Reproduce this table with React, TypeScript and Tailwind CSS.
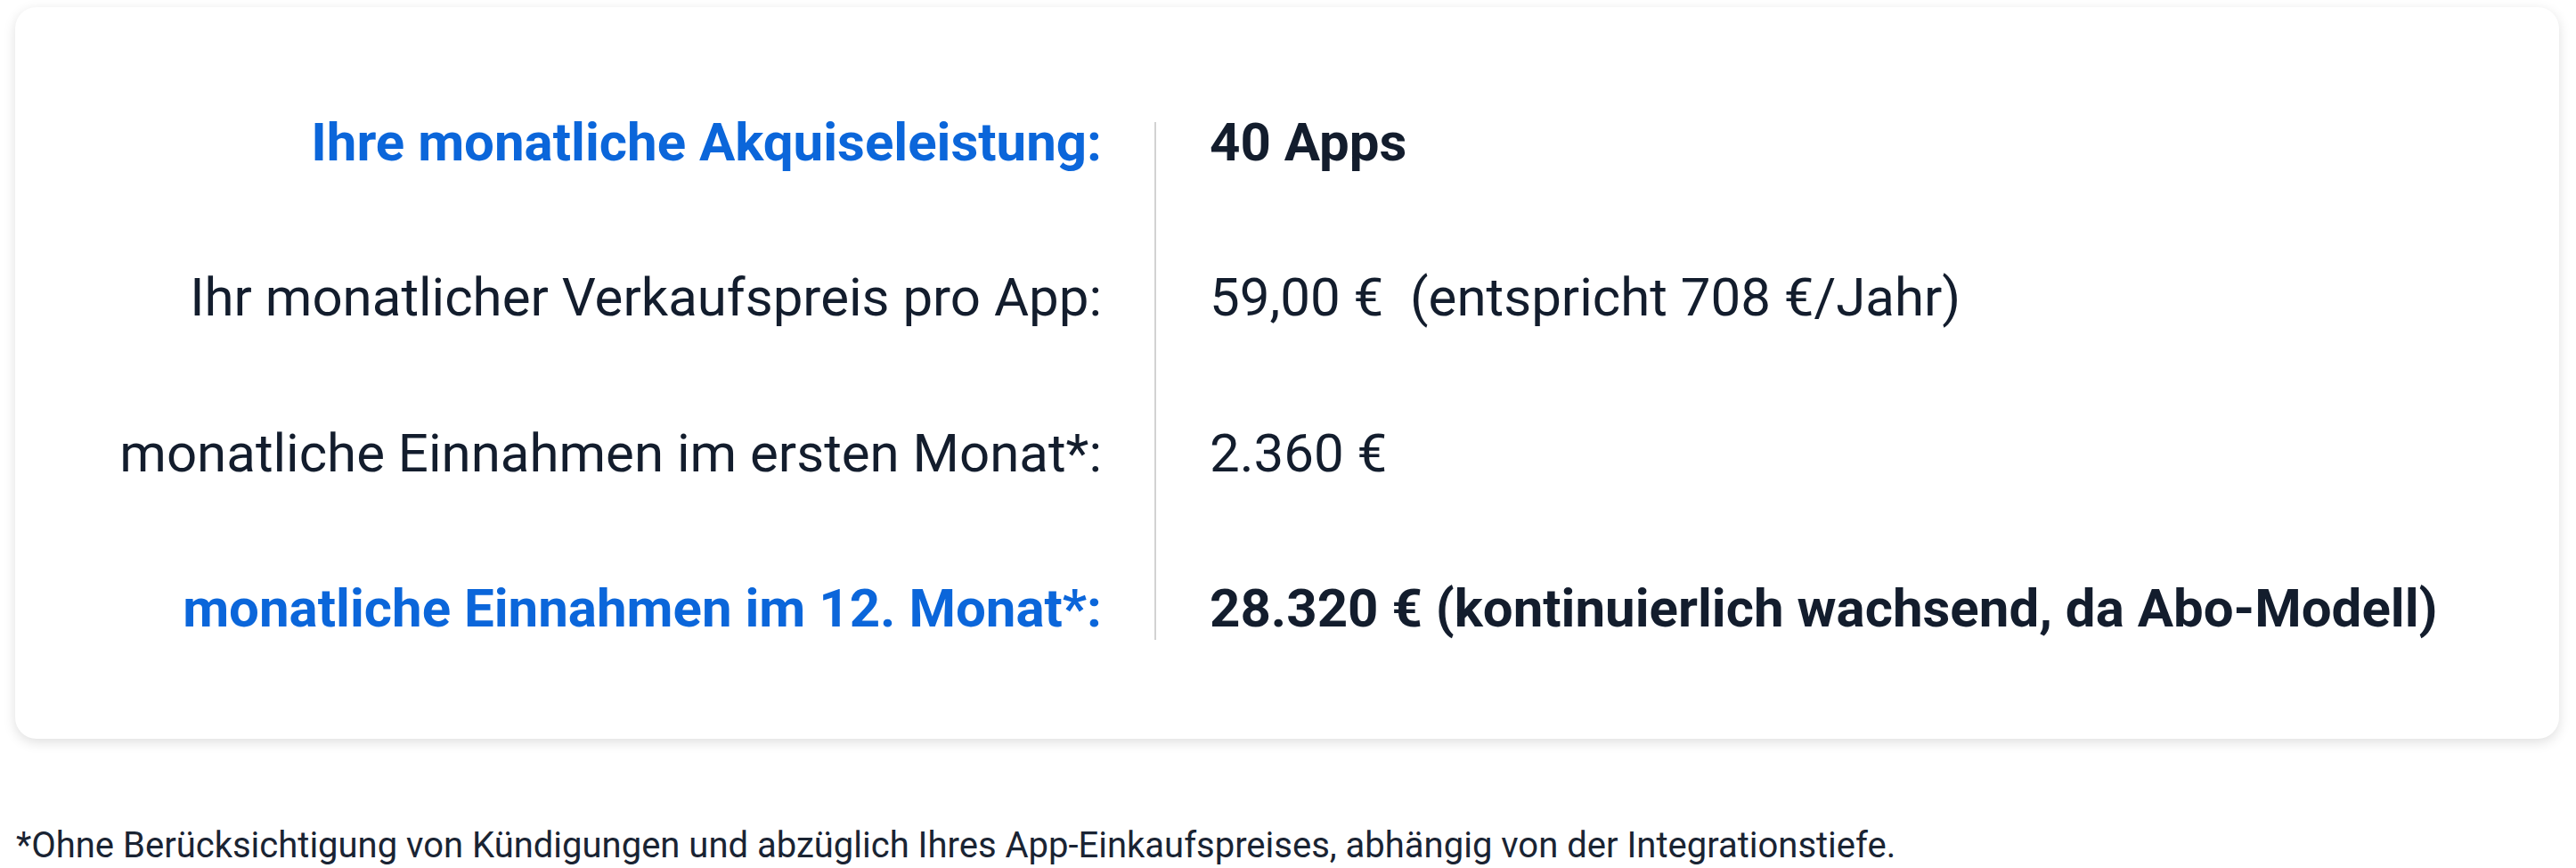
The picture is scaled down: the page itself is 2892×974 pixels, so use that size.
import React from 'react';

type Row = {
  label: string;
  value: string;
  highlight?: boolean;
};

const rows: Row[] = [
  { label: 'Ihre monatliche Akquiseleistung:', value: '40 Apps', highlight: true },
  { label: 'Ihr monatlicher Verkaufspreis pro App:', value: '59,00 €\u00a0 (entspricht 708 €/Jahr)' },
  { label: 'monatliche Einnahmen im ersten Monat*:', value: '2.360 €' },
  {
    label: 'monatliche Einnahmen im 12. Monat*:',
    value: '28.320 € (kontinuierlich wachsend, da Abo-Modell)',
    highlight: true,
  },
];

export default function App() {
  return (
    <div className="min-h-screen bg-white pt-[8px] pl-[17px] pr-[19px] font-['Roboto',sans-serif] text-[#131d2d]">
      {/* Summary card */}
      <div className="flex rounded-3xl bg-white pt-[116px] pb-[110px] shadow-[0_4px_14px_rgba(0,0,0,0.13)]">
        <div className="flex w-[1220px] flex-col gap-[102.33px] text-right text-[60px] leading-[72px]">
          {rows.map((row) => (
            <div
              key={row.label}
              className={row.highlight ? 'font-bold text-[#0b66da]' : 'font-normal'}
            >
              {row.label}
            </div>
          ))}
        </div>

        <div className="ml-[59px] mt-[13px] h-[581px] w-[2px] bg-[#d2d2d2]" />

        <div className="ml-[60px] flex flex-col gap-[102.33px] text-[60px] leading-[72px]">
          {rows.map((row) => (
            <div key={row.value} className={row.highlight ? 'font-bold' : 'font-normal'}>
              {row.value}
            </div>
          ))}
        </div>
      </div>

      <p className="mt-[97px] pl-px text-[40px] leading-[46px] text-[#1a2433]">
        *Ohne Berücksichtigung von Kündigungen und abzüglich Ihres App-Einkaufspreises, abhängig von der Integrationstiefe.
      </p>
    </div>
  );
}
